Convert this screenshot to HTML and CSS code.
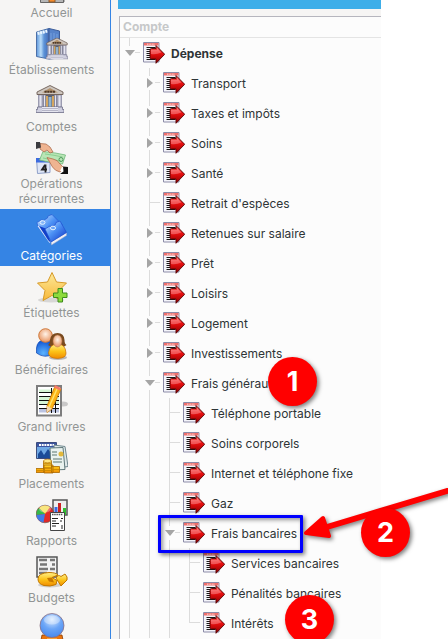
FILE: index.html
```html
<!DOCTYPE html>
<html lang="fr">
<head>
    <meta charset="UTF-8" />
    <meta name="viewport" content="width=device-width, initial-scale=1" />
    <title>Catégories</title>
    <link rel="stylesheet" href="styles.css">
</head>
<body>
    <svg class="defs" width="0" height="0" aria-hidden="true">
        <defs>
            <linearGradient id="red" x1="0" y1="0" x2="0" y2="1">
                <stop offset="0" stop-color="#f8706a" />
                <stop offset="0.4" stop-color="#f01010" />
                <stop offset="1" stop-color="#8c0000" />
            </linearGradient>
            <linearGradient id="glass" x1="0" y1="0" x2="1" y2="0">
                <stop offset="0" stop-color="#5f97dc" />
                <stop offset="0.35" stop-color="#b9dcf8" />
                <stop offset="0.6" stop-color="#5c93d8" />
                <stop offset="1" stop-color="#4269b4" />
            </linearGradient>
            <linearGradient id="folder" x1="0" y1="0" x2="1" y2="1">
                <stop offset="0" stop-color="#d5ebff" />
                <stop offset="0.45" stop-color="#4d92f5" />
                <stop offset="1" stop-color="#0b31c4" />
            </linearGradient>
            <linearGradient id="gold" x1="0" y1="0" x2="0" y2="1">
                <stop offset="0" stop-color="#fff08a" />
                <stop offset="0.5" stop-color="#fcc419" />
                <stop offset="1" stop-color="#f08c00" />
            </linearGradient>
            <linearGradient id="star" x1="0" y1="0" x2="0" y2="1">
                <stop offset="0" stop-color="#fde99a" />
                <stop offset="1" stop-color="#f8b93a" />
            </linearGradient>
            <radialGradient id="skin" cx="0.5" cy="0.4" r="0.6">
                <stop offset="0" stop-color="#fff3e8" />
                <stop offset="1" stop-color="#e8935f" />
            </radialGradient>
            <radialGradient id="blue" cx="0.4" cy="0.8" r="0.8">
                <stop offset="0" stop-color="#5cb4ff" />
                <stop offset="1" stop-color="#0c4fd0" />
            </radialGradient>
            <radialGradient id="ball" cx="0.5" cy="0.25" r="0.8">
                <stop offset="0" stop-color="#d7e9ff" />
                <stop offset="0.5" stop-color="#6ba5f7" />
                <stop offset="1" stop-color="#4385ec" />
            </radialGradient>
            <symbol id="bank" viewBox="0 0 28 28">
                <path d="M2 9h24v17H2z" fill="#a9a9bd" />
                <path d="M7 10h14v12H7z" fill="#5b6070" />
                <path d="M10 11h2v11h-2zM16 11h2v11h-2z" fill="#d4a660" />
                <path d="M12.500 12h3v10h-3z" fill="#8fb2cf" />
                <path d="M3 10h3v12H3zM7.500 10h2v12h-2zM18.500 10h2v12h-2zM22 10h3v12h-3z" fill="#e4e4f0" stroke="#7c7c94" stroke-width=".6" />
                <path d="M14 .5L27 7v2.500H1V7z" fill="#cdc5be" stroke="#6d5c54" stroke-width=".9" />
                <path d="M14 3l8 4.500H6z" fill="#b3936e" />
                <path d="M8.500 6.800h11" stroke="#4d3828" stroke-width="2" stroke-dasharray="2.200 .6" />
                <path d="M1.500 22h25v2.500H28V27.500H0v-3h1.500z" fill="#cfcfdf" stroke="#6f6f88" stroke-width=".8" />
                <path d="M6 22h16v5H6z" fill="#e6e6f0" />
                <path d="M6 23.500h16M6 25.500h16" stroke="#a0a0b6" stroke-width=".7" />
            </symbol>
            <symbol id="expense" viewBox="0 0 22 22">
                <path d="M.5.5h15.500v19.500H.5z" fill="#f4f4fa" stroke="#8c8ca8" />
                <path d="M1 1h14.500v2.500H1z" fill="#ef6f6c" />
                <path d="M4 2.200h8" stroke="#fff" stroke-width=".8" stroke-dasharray="1 .6" />
                <path d="M3.500 5.500h9M3.500 7.500h4M3.500 9.500h4M3.500 11.500h4M3.500 13.500h4M3.500 15.500h4M3.500 17.500h9" stroke="#1a1a1a" stroke-width="1" />
                <path d="M13 3.500V6.500H8.500q-1.500 0-1.500 1.500V15.500q0 1.500 1.500 1.500H13V21.300L21.700 12.300z" fill="url(#red)" stroke="#500" stroke-width=".9" />
                <path d="M8 8h6V6l4.500 4.500Q13 13 8 12z" fill="#fff" opacity=".3" />
            </symbol>
        </defs>
    </svg>

    <div class="page">
        <div class="app">
            <nav class="sidebar">
                <a href="#">
                    <svg viewBox="0 0 32 32" aria-hidden="true">
                        <path d="M5 14h23v17H5z" fill="#f4f4f4" stroke="#777" />
                        <path d="M16 2L1 15h30z" fill="#d9534f" stroke="#803020" />
                        <path d="M4.500 27h23v4.500h-23z" fill="#b5b5b5" stroke="#666" />
                        <path d="M13 17h6v14h-6z" fill="#f58b2c" stroke="#8e5a2a" />
                    </svg>
                    <span>Accueil</span>
                </a>
                <a href="#">
                    <svg viewBox="0 0 32 32" aria-hidden="true">
                        <path d="M.5 4L13 .5V31L.5 28.500z" fill="url(#glass)" stroke="#4c70a8" />
                        <path d="M13 .5L23.500 3v27L13 31z" fill="#5683ca" stroke="#3e5d98" />
                        <path d="M1.500 5.500L12 3" stroke="#eaf5ff" stroke-width="3" stroke-dasharray="2 .7" />
                        <path d="M15 5v22M18 5v22M21 6v20" stroke="#7ea9e4" stroke-width=".8" />
                        <use href="#bank" x="10" y="9.500" width="22" height="22" />
                    </svg>
                    <span>Établissements</span>
                </a>
                <a href="#">
                    <svg viewBox="0 0 32 32" aria-hidden="true">
                        <use href="#bank" x="0" y="0" width="28" height="28" />
                    </svg>
                    <span>Comptes</span>
                </a>
                <a href="#">
                    <svg viewBox="0 0 32 32" aria-hidden="true">
                        <path d="M.5 16.500h13.500v14L1.500 31.500z" fill="#dfe6f6" stroke="#8fa0c8" />
                        <path d="M0 16h13v4.500H0z" fill="#3d6be0" />
                        <path d="M9 23L6 27.500h5M9.500 22.500v8" fill="none" stroke="#222" stroke-width="1.800" />
                        <path d="M7 9.500q12 1 22.500 3.500l-3 9q-11-1-23-4z" fill="#b9e6b6" stroke="#6eb879" stroke-width=".8" />
                        <path d="M9 12q9 1 17.500 3M7 16q9 2 18 3" stroke="#8bcf91" fill="none" />
                        <circle cx="25" cy="17.500" r="2" fill="none" stroke="#509a60" />
                        <path d="M4 1.500l6 .5 4 3 3 5-3 1-3-3-3 2-4-3z" fill="#efb491" stroke="#a86344" stroke-width=".7" />
                        <path d="M0 0h4l1 5.500-5 1.500z" fill="#3c3c40" />
                        <path d="M11 15.500l6 1.500q5 1 7 5l4 4-4 4q-5-1-7.500-5z" fill="#efb491" stroke="#a86344" stroke-width=".7" />
                        <path d="M24 29l2-4h2v5z" fill="#fff" />
                        <path d="M27 24.500l5 .5v7h-8l3.500-2.500z" fill="#111" />
                    </svg>
                    <span>Opérations<br>récurrentes</span>
                </a>
                <a href="#" class="active">
                    <svg viewBox="0 0 32 32" aria-hidden="true">
                        <path d="M1 8.500l5-3 1.500 1 4-2.500.5-2 4-1.500 2 2 8 8L13 25 2 13z" fill="url(#folder)" stroke="#1e50d0" stroke-width=".6" />
                        <path d="M1.500 12L13.500 29l1.500-2L3 12z" fill="#dfe8fa" />
                        <path d="M3 12l9 14 2.500 2.500L11 15z" fill="#123fc8" />
                        <path d="M15 28L30.500 18.500v3L15.500 31z" fill="#eeeef4" stroke="#9aa4c6" stroke-width=".5" />
                        <path d="M9 15l5-3 1.500 1 4-2.500.5-2 4-1.500L30.500 18.500 15 28z" fill="url(#folder)" stroke="#1e50d0" stroke-width=".7" />
                        <ellipse cx="6.500" cy="8.500" rx="2.500" ry="1.800" fill="none" stroke="#e8f4ff" />
                        <ellipse cx="17" cy="14" rx="2.500" ry="1.800" fill="none" stroke="#e8f4ff" />
                    </svg>
                    <span>Catégories</span>
                </a>
                <a href="#">
                    <svg viewBox="0 0 32 32" aria-hidden="true">
                        <ellipse cx="15" cy="29" rx="13" ry="2.500" fill="#000" opacity=".12" />
                        <path d="M16 1.500l4.500 9.500 10 1-7.500 7.500 2 10-9-5-9 5 2-10-7.500-7.500 10-1z" fill="url(#star)" stroke="#d79a28" stroke-linejoin="round" />
                        <path d="M22 17.500h4.500v4.500H31v4.500h-4.500V31H22v-4.500h-4.500V22H22z" fill="#8ddb3c" stroke="#3f8c1c" />
                    </svg>
                    <span>Étiquettes</span>
                </a>
                <a href="#">
                    <svg viewBox="0 0 32 32" aria-hidden="true">
                        <ellipse cx="22" cy="29.500" rx="9" ry="2.500" fill="#000" opacity=".25" />
                        <path d="M.5 20q1-8 8-8 8 0 9 8v6q-9 5-17-1z" fill="url(#blue)" stroke="#0a44b0" stroke-width=".7" />
                        <circle cx="9.500" cy="7.500" r="6.800" fill="url(#skin)" stroke="#d07a3c" />
                        <path d="M12 17q2-1 2-5 1-7 7.500-7t7 7q0 4 2 5l-3 2h-12z" fill="#7a4a1e" />
                        <path d="M12.500 25q1-9 9-9t8.500 9q.5 5-8.500 5.500-9-.5-9-5.500z" fill="url(#gold)" stroke="#c96f00" stroke-width=".7" />
                        <ellipse cx="21.500" cy="13" rx="4.500" ry="6" fill="url(#skin)" stroke="#b97a50" stroke-width=".5" />
                    </svg>
                    <span>Bénéficiaires</span>
                </a>
                <a href="#">
                    <svg viewBox="0 0 32 32" aria-hidden="true">
                        <ellipse cx="27" cy="19" rx="5" ry="2.500" fill="#000" opacity=".18" />
                        <path d="M1 1h24v29.500H1z" fill="#fff" stroke="#7d7d7d" stroke-width="2" />
                        <path d="M3 4.500h20v3H3zM3 12h20v3H3zM3 16h20v3H3z" fill="#d6f5d6" />
                        <path d="M3 23.500h20v4H3z" fill="#bcc4e2" />
                        <path d="M3 7.500h20M3 11.500h20M3 15.500h20M3 19.500h20M3 23.500h20M15.500 3v25M19.500 12v16" stroke="#111" />
                        <path d="M19 1l6 3-9 20-5 3.500V21z" fill="#fdb515" stroke="#c97300" stroke-width=".8" />
                        <path d="M21.500 3L13 22" stroke="#ffe36b" stroke-width="1.500" />
                        <path d="M11 21l5 2.500-5 4z" fill="#f3d7b0" />
                        <path d="M19 0l6 3-1 2.500-6-3z" fill="#f27a6c" />
                    </svg>
                    <span>Grand livres</span>
                </a>
                <a href="#">
                    <svg viewBox="0 0 32 32" aria-hidden="true">
                        <path d="M.5.5h20v16H.5z" fill="#6fa8e4" stroke="#3d4c7c" />
                        <path d="M1 1h19v4H1z" fill="#3c55a0" />
                        <path d="M3 3h15" stroke="#fff" stroke-width="1.800" stroke-dasharray="2 .7" />
                        <path d="M2 16v-4l3-4 3 5 4-6 3 4 5-3v8z" fill="#1b4b98" />
                        <path d="M18 3l11 1.500 3 20-13 2z" fill="#dfe9ea" stroke="#70888e" />
                        <path d="M14 6l13-.5 2 22-14 .5z" fill="#e9f2ef" stroke="#60787a" />
                        <circle cx="25" cy="12" r="2.500" fill="#e2b83c" />
                        <path d="M16 10h5M16 13h5M17 17h9M17 20h9" stroke="#8ba09a" stroke-width="1.500" />
                        <path d="M7.500 19h8v7h-8zM0 26.500h8v4H0zM8 23h9v8H8zM15.500 24.500h8v6h-8z" fill="url(#gold)" stroke="#a86800" stroke-width=".8" />
                        <path d="M7.500 21.500h8M0 28.500h8M8 26h9M8 28.500h9M15.500 27.500h8" stroke="#c98700" stroke-width=".8" />
                        <ellipse cx="11.500" cy="19" rx="4" ry="1.800" fill="#ffe680" stroke="#a86800" stroke-width=".6" />
                    </svg>
                    <span>Placements</span>
                </a>
                <a href="#">
                    <svg viewBox="0 0 32 32" aria-hidden="true">
                        <path d="M17 1h14v15H17z" fill="#eee" stroke="#555" stroke-width="1.500" />
                        <path d="M18.500 8h3v7h-3z" fill="#3d6be0" />
                        <path d="M22 4h3v11h-3z" fill="#c22" />
                        <path d="M27 9h3v7h-3z" fill="#2fbf2f" />
                        <circle cx="9" cy="15" r="8.800" fill="#e02828" stroke="#555" stroke-width=".6" />
                        <path d="M9 15L3 9a8.500 8.500 0 0 1 11-1z" fill="#f5d93b" />
                        <path d="M9 15L3 9a8.500 8.500 0 0 0-2.500 7z" fill="#34b84a" />
                        <path d="M9 15L.5 16a8.500 8.500 0 0 0 7 7.400z" fill="#3f7be8" />
                        <ellipse cx="9" cy="10" rx="6" ry="3.500" fill="#fff" opacity=".35" />
                        <path d="M14.500 13.500h14v18h-14z" fill="#fff" stroke="#444" />
                        <path d="M16 15.500h11" stroke="#555" stroke-width="1.500" stroke-dasharray="1.500 .7" />
                        <path d="M16 19.500h6M16 22h4M16 24.500h7M16 27h4M25 19.500h2M24 22h2M25 27h2M25 29h2" stroke="#222" />
                    </svg>
                    <span>Rapports</span>
                </a>
                <a href="#">
                    <svg viewBox="0 0 32 32" aria-hidden="true">
                        <path d="M1 1h20v20H1z" fill="#f3f3f3" stroke="#555" stroke-width="1.500" />
                        <path d="M3 4h8M4 8.500h7M3 13h9M3 17h8M14 4h5M16 8.500h3M14 13h5" stroke="#777" stroke-width="2.500" />
                        <ellipse cx="14" cy="29" rx="12" ry="2.500" fill="#000" opacity=".15" />
                        <path d="M2 23q0-6 11-6.500 7 0 9 2.500l-6 2.500 5 3-1 4q-6 2.500-12 1-6-1.500-6-6.500z" fill="url(#gold)" stroke="#c07800" />
                        <path d="M11 22l5-.5 2 5-5-1z" fill="#c97800" />
                        <path d="M20 22q2-4 5-1.500l4-2.500q3 3 2 6l-6 6z" fill="url(#gold)" stroke="#c07800" />
                    </svg>
                    <span>Budgets</span>
                </a>
                <a href="#" aria-label="Prévisions">
                    <svg viewBox="0 0 32 32" aria-hidden="true">
                        <path d="M6 22h20l2 10H4z" fill="#e8730c" stroke="#8c3a00" stroke-width=".8" />
                        <path d="M11 25h10v7H11z" fill="#f9a13a" />
                        <circle cx="16" cy="12.500" r="12" fill="url(#ball)" stroke="#8a6f80" stroke-width=".8" />
                        <ellipse cx="16" cy="7" rx="8" ry="4.500" fill="#fff" opacity=".35" />
                    </svg>
                </a>
            </nav>

            <main class="content">
                <div class="title-bar"></div>
                <section class="tree">
                    <h2 class="tree-header">Compte</h2>
                    <ul>
                        <li>
                            <div class="row root"><button class="toggle open" aria-label="Replier Dépense"></button><svg class="icon"><use href="#expense" /></svg>Dépense</div>
                            <ul>
                                <li><div class="row"><button class="toggle" aria-label="Déplier Transport"></button><svg class="icon"><use href="#expense" /></svg>Transport</div></li>
                                <li><div class="row"><button class="toggle" aria-label="Déplier Taxes et impôts"></button><svg class="icon"><use href="#expense" /></svg>Taxes et impôts</div></li>
                                <li><div class="row"><button class="toggle" aria-label="Déplier Soins"></button><svg class="icon"><use href="#expense" /></svg>Soins</div></li>
                                <li><div class="row"><button class="toggle" aria-label="Déplier Santé"></button><svg class="icon"><use href="#expense" /></svg>Santé</div></li>
                                <li><div class="row"><span class="leaf"></span><svg class="icon"><use href="#expense" /></svg>Retrait d'espèces</div></li>
                                <li><div class="row"><button class="toggle" aria-label="Déplier Retenues sur salaire"></button><svg class="icon"><use href="#expense" /></svg>Retenues sur salaire</div></li>
                                <li><div class="row"><button class="toggle" aria-label="Déplier Prêt"></button><svg class="icon"><use href="#expense" /></svg>Prêt</div></li>
                                <li><div class="row"><button class="toggle" aria-label="Déplier Loisirs"></button><svg class="icon"><use href="#expense" /></svg>Loisirs</div></li>
                                <li><div class="row"><button class="toggle" aria-label="Déplier Logement"></button><svg class="icon"><use href="#expense" /></svg>Logement</div></li>
                                <li><div class="row"><button class="toggle" aria-label="Déplier Investissements"></button><svg class="icon"><use href="#expense" /></svg>Investissements</div></li>
                                <li>
                                    <div class="row"><button class="toggle open" aria-label="Replier Frais généraux"></button><svg class="icon"><use href="#expense" /></svg>Frais généraux</div>
                                    <ul>
                                        <li><div class="row"><span class="leaf"></span><svg class="icon"><use href="#expense" /></svg>Téléphone portable</div></li>
                                        <li><div class="row"><span class="leaf"></span><svg class="icon"><use href="#expense" /></svg>Soins corporels</div></li>
                                        <li><div class="row"><span class="leaf"></span><svg class="icon"><use href="#expense" /></svg>Internet et téléphone fixe</div></li>
                                        <li><div class="row"><span class="leaf"></span><svg class="icon"><use href="#expense" /></svg>Gaz</div></li>
                                        <li>
                                            <div class="row"><button class="toggle open" aria-label="Replier Frais bancaires"></button><svg class="icon"><use href="#expense" /></svg>Frais bancaires</div>
                                            <ul class="last">
                                                <li><div class="row"><span class="leaf"></span><svg class="icon"><use href="#expense" /></svg>Services bancaires</div></li>
                                                <li><div class="row"><span class="leaf"></span><svg class="icon"><use href="#expense" /></svg>Pénalités bancaires</div></li>
                                                <li><div class="row"><span class="leaf"></span><svg class="icon"><use href="#expense" /></svg>Intérêts</div></li>
                                            </ul>
                                        </li>
                                    </ul>
                                </li>
                            </ul>
                        </li>
                    </ul>
                </section>
            </main>
        </div>

        <!-- Annotations -->
        <div class="highlight"></div>
        <svg class="arrow" viewBox="0 0 150 60" aria-hidden="true">
            <path d="M27 42L147 6" stroke="#f00" stroke-width="6" stroke-linecap="round" />
            <path d="M6 48L23 33L29 51z" fill="#f00" stroke="#f00" stroke-width="4" stroke-linejoin="round" />
        </svg>
        <div class="step step-1">1</div>
        <div class="step step-2">2</div>
        <div class="step step-3">3</div>
    </div>
</body>
</html>
```
FILE: styles.css
```css
:root {
    --blue: #3584e4;
    --bar: #3daee9;
    --panel: #f6f5f4;
    --base: #fcfcfc;
    --line: #dcdcdc;
    --text: #2e3436;
    --muted: #929595;
    --red: #ff0000;
}
* {
    margin: 0;
    padding: 0;
    box-sizing: border-box;
}
body {
    background-color: #ffffff;
    color: var(--text);
    font-family: Inter, sans-serif;
    font-size: 12px;
    overflow: hidden;
}
.defs {
    position: absolute;
}
.page {
    position: relative;
    padding-right: 67px;
}
.app {
    display: flex;
    background-color: var(--panel);
}

/* Sidebar */
.sidebar {
    contain: size;
    flex: none;
    width: 111px;
    border-right: 1px solid var(--blue);
    overflow: hidden;
}
.sidebar a {
    display: flex;
    flex-direction: column;
    align-items: center;
    padding: 5px 7px 3px 0;
    color: var(--muted);
    text-align: center;
    text-decoration: none;
    line-height: 15px;
}
.sidebar a:first-child {
    margin-top: -34px;
}
.sidebar a.active {
    background-color: var(--blue);
    color: #ffffff;
}
.sidebar svg {
    width: 32px;
    height: 32px;
    margin-bottom: 2px;
}

/* Content */
.content {
    flex: 1;
    display: flex;
    flex-direction: column;
    gap: 7px;
    padding-left: 7px;
}
.title-bar {
    height: 9px;
    background-color: var(--bar);
}
.tree {
    margin-left: 1px;
    padding-bottom: 1px;
    background-color: var(--base);
    border-top: 1px solid #b6b6be;
    border-left: 1px solid #b6b6be;
}
.tree-header {
    padding-left: 3px;
    border-bottom: 1px solid #e4e4e4;
    color: #c6c8c9;
    font-size: 12px;
    font-weight: 700;
    line-height: 20px;
}
.tree ul {
    list-style: none;
    background: linear-gradient(var(--line), var(--line)) 9px 0 / 1px 100% no-repeat;
}
.tree li > ul {
    margin-left: 20px;
}
.tree ul.last {
    background-size: 1px calc(100% - 15px);
}
.row {
    display: flex;
    align-items: center;
    height: 30px;
    white-space: nowrap;
}
.row.root {
    font-weight: 700;
}
.toggle {
    position: relative;
    width: 20px;
    height: 14px;
    border: none;
    background: linear-gradient(var(--line), var(--line)) 15px 6px / 5px 1px no-repeat var(--base);
}
.toggle::before {
    content: "";
    position: absolute;
    top: 2px;
    left: 7px;
    border: 5px solid transparent;
    border-left: 6px solid #a5a5a5;
    border-right: none;
}
.toggle.open::before {
    top: 4px;
    left: 5px;
    border: 5px solid transparent;
    border-top: 6px solid #a5a5a5;
    border-bottom: none;
}
.leaf {
    width: 20px;
    height: 14px;
    background: linear-gradient(var(--line), var(--line)) 9px 6px / 11px 1px no-repeat;
}
.icon {
    width: 22px;
    height: 22px;
    margin: 0 6px 0 3px;
}

/* Annotations */
.highlight {
    position: absolute;
    top: 515px;
    left: 158px;
    width: 145px;
    height: 38px;
    border: 3px solid #0000ff;
    border-radius: 1px;
    box-shadow: 2px 2px 4px rgba(0,0,0,0.5), inset 2px 2px 4px rgba(0,0,0,0.4);
}
.arrow {
    position: absolute;
    top: 485px;
    left: 300px;
    width: 150px;
    height: 60px;
    fill: none;
    filter: drop-shadow(2px 2px 2px rgba(0,0,0,0.5));
}
.step {
    position: absolute;
    width: 49px;
    height: 49px;
    border-radius: 50%;
    background-color: var(--red);
    box-shadow: 2px 2px 4px rgba(0,0,0,0.5);
    color: #ffffff;
    font-family: Inter, sans-serif;
    font-size: 27px;
    font-weight: 700;
    line-height: 49px;
    text-align: center;
}
.step-1 {
    top: 357px;
    left: 268px;
}
.step-2 {
    top: 508px;
    left: 361px;
}
.step-3 {
    top: 595px;
    left: 285px;
}
```
